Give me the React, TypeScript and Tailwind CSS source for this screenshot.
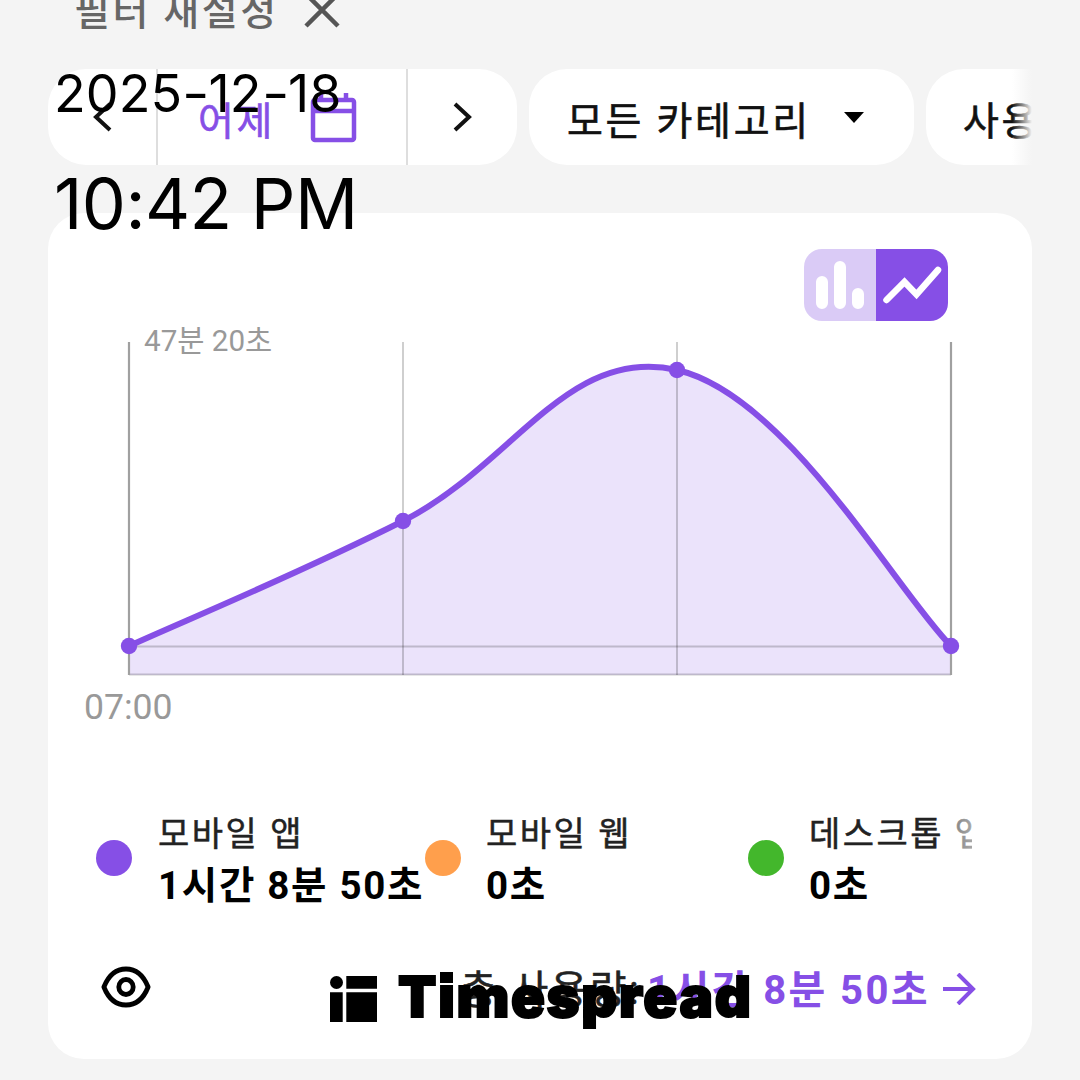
import React from 'react';
import clsx from 'clsx';

interface UsageItem {
  label: string;
  value: string;
  dotClass: string;
  itemClass: string;
  gapClass: string;
}

const usageItems: UsageItem[] = [
  { label: '모바일 앱', value: '1시간 8분 50초', dotClass: 'bg-[#864fe6]', itemClass: 'w-[329px]', gapClass: 'gap-[26px]' },
  { label: '모바일 웹', value: '0초', dotClass: 'bg-[#ff9f4c]', itemClass: 'w-[323px]', gapClass: 'gap-[25px]' },
  { label: '데스크톱 앱', value: '0초', dotClass: 'bg-[#43b72c]', itemClass: 'w-[224px]', gapClass: 'gap-[25px]' },
];

const gridX = [403, 677];

const points = [
  [129, 646],
  [403, 521],
  [677, 370],
  [951, 646],
];

const curve =
  'M129 646 C183.8 621 293.4 576.2 403 521 C512.6 465.8 567.4 345 677 370 C786.6 395 896.2 590.8 951 646';

const FilterBar: React.FC = () => (
  <div className="relative mx-12 h-24 overflow-hidden">
    <div className="flex h-24 gap-3 text-[39px] leading-none tracking-[2.7px] text-[#111]">
      <div className="flex w-[469px] shrink-0 overflow-hidden rounded-[38px] bg-white">
        <div className="flex w-[110px] items-center justify-center border-r-2 border-[#dedede]">
          <svg className="h-[30px] w-[20px]" viewBox="0 0 20 30" fill="none" stroke="#111" strokeWidth="4">
            <path d="M18 2L4 15L18 28" />
          </svg>
        </div>
        <div className="flex w-[250px] items-center gap-[34px] border-r-2 border-[#dedede] pl-[40px] text-[#864fe6]">
          <span className="pt-[10px] [-webkit-text-stroke:0.6px]">어제</span>
          <svg className="mt-[2px] h-[50px] w-[48px]" viewBox="0 0 48 50" fill="none" stroke="currentColor" strokeWidth="4.5" strokeLinejoin="round">
            <rect x="4" y="7" width="41" height="40" rx="2" />
            <path d="M4 18H45M12 0V7M37 0V7" />
          </svg>
        </div>
        <div className="flex flex-1 items-center justify-center">
          <svg className="h-[30px] w-[20px]" viewBox="0 0 20 30" fill="none" stroke="#111" strokeWidth="4">
            <path d="M2 2L16 15L2 28" />
          </svg>
        </div>
      </div>
      <div className="flex w-[385px] shrink-0 items-center gap-[33px] rounded-[38px] bg-white pl-[38px]">
        <span className="whitespace-nowrap pt-[10px] [-webkit-text-stroke:0.6px]">모든 카테고리</span>
        <svg className="h-[11px] w-[20px]" viewBox="0 0 20 11">
          <path d="M0 0H20L10 11Z" fill="#000" />
        </svg>
      </div>
      <div className="flex w-[300px] shrink-0 items-center rounded-[38px] bg-white pl-[37px]">
        <span className="whitespace-nowrap pt-[10px] [-webkit-text-stroke:0.6px]">사용</span>
      </div>
    </div>
    <div className="absolute top-0 right-0 h-24 w-[20px] bg-linear-to-r from-[#f4f4f4]/0 to-[#f4f4f4]" />
  </div>
);

const ChartToggle: React.FC = () => (
  <div className="ml-[756px] flex h-[72px] w-[144px] overflow-hidden rounded-[18px]">
    <div className="w-[72px] bg-[#dacbf6]">
      <svg className="size-[72px]" viewBox="0 0 72 72" stroke="#fff" strokeWidth="12" strokeLinecap="round">
        <path d="M18 33V54M36 18V54M54 45V54" />
      </svg>
    </div>
    <div className="w-[72px] bg-[#864fe6]">
      <svg className="size-[72px]" viewBox="0 0 72 72" fill="none" stroke="#fff" strokeWidth="6.500" strokeLinecap="round">
        <path d="M10.500 51L28.500 33L40.500 45.500L62 21" />
      </svg>
    </div>
  </div>
);

const UsageChart: React.FC = () => (
  <svg className="block h-[420px] w-[984px]" viewBox="48 321 984 420">
    <path d={`${curve} V675 H129 Z`} fill="#ebe3fb" />
    <g stroke="#000" strokeOpacity="0.19" strokeWidth="2">
      {gridX.map((x) => (
        <path key={x} d={`M${x} 342V675`} />
      ))}
      <path d="M129 646.500H951M129 674.500H951" />
    </g>
    <path d="M129 342V675M951 342V675" stroke="#a0a0a0" strokeWidth="2.2" />
    <path d={curve} fill="none" stroke="#864fe6" strokeWidth="6" />
    {points.map(([x, y]) => (
      <circle key={x} cx={x} cy={y} r="8.200" fill="#864fe6" />
    ))}
    <text x="144" y="351" fontSize="29.600" fill="#999">47분 20초</text>
    <text x="84" y="719" fontSize="35.600" fill="#999">07:00</text>
  </svg>
);

const UsageLegend: React.FC = () => (
  <div className="relative ml-12 mt-[67px] flex w-[876px] overflow-hidden">
    {usageItems.map((item) => (
      <div key={item.label} className={clsx('flex h-[100px] shrink-0 items-center', item.itemClass, item.gapClass)}>
        <span className={clsx('size-9 shrink-0 rounded-full', item.dotClass)} />
        <div className="flex flex-col whitespace-nowrap pt-[2px]">
          <span className="h-[50px] text-[34px] leading-[50px] tracking-[2.5px] text-[#222] [-webkit-text-stroke:0.5px]">{item.label}</span>
          <span className="h-[50px] text-[38.5px] font-bold leading-[53px] tracking-[1.7px] text-black">{item.value}</span>
        </div>
      </div>
    ))}
    <div className="absolute top-0 right-0 h-[50px] w-[24px] bg-linear-to-r from-white/40 to-white/60" />
  </div>
);

const UsageTotal: React.FC = () => (
  <div className="mt-[49px] flex h-[64px] items-center pl-[53px] pr-[56px]">
    <svg className="mb-[4px] h-[42px] w-[50px]" viewBox="0 0 52 42" preserveAspectRatio="none" fill="none" stroke="#000" strokeWidth="5">
      <path d="M3 21C8 9 16 3 26 3S44 9 49 21C44 33 36 39 26 39S8 33 3 21Z" strokeLinejoin="round" />
      <circle cx="26" cy="21" r="7.500" />
    </svg>
    <div className="ml-auto flex items-center whitespace-nowrap text-[40px] leading-none tracking-[2.4px]">
      <span className="pt-[3px] text-[#222] [-webkit-text-stroke:0.5px]">총 사용량:</span>
      <span className="ml-[6px] pt-[3px] font-bold text-[#864fe6]">1시간 8분 50초</span>
      <svg className="ml-[13px] h-[32px] w-[33px]" viewBox="0 0 33 32" fill="none" stroke="#864fe6" strokeWidth="4">
        <path d="M0 16H30M15 1L30 16L15 31" />
      </svg>
    </div>
  </div>
);

// Date, time and brand sit on top of the report
const Watermark: React.FC = () => (
  <div className="absolute inset-0 font-['Inter',sans-serif] text-black">
    <div className="absolute left-[54px] top-[63px] whitespace-nowrap text-[52px] leading-[62px] tracking-[0.1px]">
      2025<span className="inline-block origin-left scale-x-115 tracking-[2.4px]">-</span>12<span className="inline-block origin-left scale-x-115 tracking-[2.4px]">-</span>18
    </div>
    <div className="absolute left-[54px] top-[162px] whitespace-nowrap text-[70px] leading-[84px] tracking-[-0.6px]">10:42 PM</div>
    <div className="absolute left-[330px] top-[962px] flex items-center gap-[21px]">
      <svg className="mt-[4px] h-[46px] w-[47px]" viewBox="0 0 47 46">
        <circle cx="6.500" cy="6.500" r="6.500" />
        <path d="M16.300 0H47V12.700H16.300ZM0 16.300H12.700V46H0ZM16.300 16.300H47V46H16.300Z" />
      </svg>
      <span className="text-[56px] font-black leading-[70px] tracking-[1.7px] [-webkit-text-stroke:2px] [font-feature-settings:'ss07']">Timespread</span>
    </div>
  </div>
);

export default function App() {
  return (
    <div className="relative h-[1080px] w-[1080px] overflow-hidden bg-[#f4f4f4] font-[Roboto,'Noto_Sans_CJK_KR',sans-serif]">
      <div className="flex h-[69px] items-start gap-[25px] overflow-hidden pl-[74px] text-[#666]">
        <span className="-mt-[14px] h-[52px] whitespace-nowrap text-[39px] font-medium leading-[52px] tracking-[2.6px]">필터 재설정</span>
        <svg className="-mt-[8px] h-[36px] w-[36px]" viewBox="0 0 36 36" fill="none" stroke="#555" strokeWidth="4.500">
          <path d="M2 2L34 34M34 2L2 34" />
        </svg>
      </div>
      <FilterBar />
      <main className="mx-12 mt-12 h-[846px] rounded-[36px] bg-white pt-9">
        <ChartToggle />
        <UsageChart />
        <UsageLegend />
        <UsageTotal />
      </main>
      <Watermark />
    </div>
  );
}
